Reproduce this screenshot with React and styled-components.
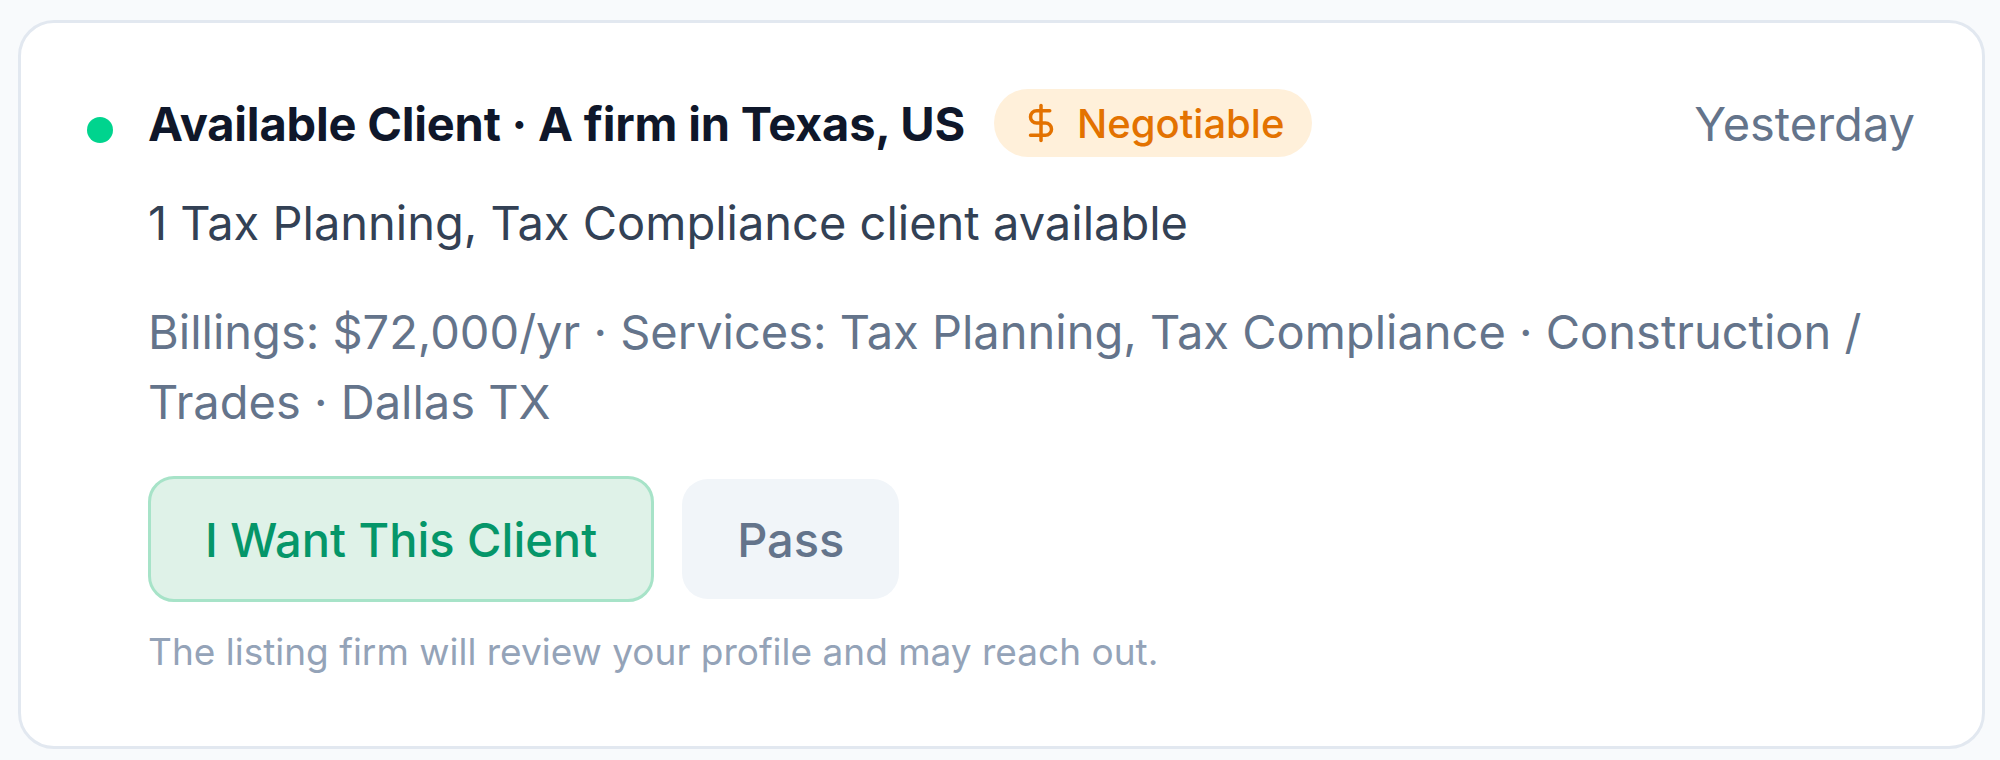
import styled, { createGlobalStyle } from "styled-components";
import { DollarSign } from "lucide-react";

const GlobalStyle = createGlobalStyle`
  html, body {
    margin: 0;
    background: #f8fafc;
    font-family: Inter, "Noto Sans", sans-serif;
  }
`;

function App() {
  return (
    <>
      <GlobalStyle />
      <Page>
        <Card>
          <StatusDot />
          <Body>
            <Header>
              <Title>Available Client · A firm in Texas, US</Title>
              <Badge>
                <DollarSign size={42} strokeWidth={2} />
                Negotiable
              </Badge>
              <Time>Yesterday</Time>
            </Header>
            <Summary>1 Tax Planning, Tax Compliance client available</Summary>
            <Details>
              Billings: $72,000/yr · Services: Tax Planning, Tax Compliance · Construction / Trades · Dallas TX
            </Details>
            <Actions>
              <Button $primary>I Want This Client</Button>
              <Button>Pass</Button>
            </Actions>
            <Note>The listing firm will review your profile and may reach out.</Note>
          </Body>
        </Card>
      </Page>
    </>
  );
}

export default App;

const Page = styled.div`
  padding: 20px 15px 10px 18px;
`;

const Card = styled.div`
  display: flex;
  align-items: flex-start;
  gap: 35px;
  background: #ffffff;
  border: 3px solid #e2e8f0;
  border-radius: 36px;
  padding: 66px 67px 72px 66px;
`;

const StatusDot = styled.span`
  flex: none;
  width: 26px;
  height: 26px;
  margin-top: 28px;
  border-radius: 50%;
  background: #00d48e;
`;

const Body = styled.div`
  flex: 1;
  min-width: 0;
`;

const Header = styled.div`
  display: flex;
  align-items: center;
  height: 68px;
`;

const Title = styled.h2`
  margin: 0;
  font-size: 47px;
  font-weight: 700;
  color: #0f172a;
  letter-spacing: -0.2px;
  white-space: nowrap;
`;

const Badge = styled.span`
  display: inline-flex;
  align-items: center;
  gap: 15px;
  height: 68px;
  margin-left: 29px;
  padding: 0 28px 0 26px;
  border-radius: 34px;
  background: #fff0da;
  color: #e37200;
  font-size: 40px;
  font-weight: 500;
  white-space: nowrap;
`;

const Time = styled.span`
  margin-left: auto;
  font-size: 47px;
  color: #64748b;
`;

const Summary = styled.p`
  margin: 38px 0 0;
  font-size: 47px;
  line-height: 56px;
  color: #334155;
`;

const Details = styled.p`
  margin: 46px 0 0;
  font-size: 47px;
  line-height: 70px;
  color: #64748b;
`;

const Actions = styled.div`
  display: flex;
  align-items: center;
  gap: 28px;
  margin-top: 39px;
`;

const Button = styled.button`
  height: ${(p) => (p.$primary ? "126px" : "120px")};
  padding: 0 ${(p) => (p.$primary ? "54px" : "55px")};
  border: ${(p) => (p.$primary ? "3px solid #a7e3c8" : "none")};
  border-radius: 26px;
  background: ${(p) => (p.$primary ? "#dff2e8" : "#f1f5f9")};
  color: ${(p) => (p.$primary ? "#059669" : "#64748b")};
  font-family: inherit;
  font-size: 47px;
  font-weight: 500;
  cursor: pointer;
`;

const Note = styled.p`
  margin: 28px 0 0;
  font-size: 37px;
  line-height: 44px;
  color: #94a3b8;
`;
